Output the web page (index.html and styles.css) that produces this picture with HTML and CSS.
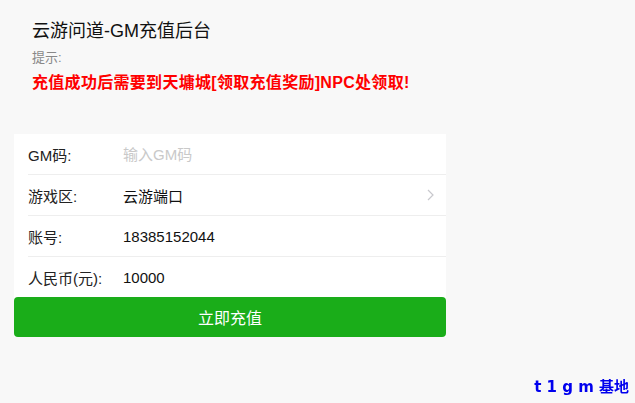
FILE: index.html
```html
<!DOCTYPE html>
<html lang="zh-CN">
<head>
    <meta charset="utf-8">
    <meta name="viewport" content="width=device-width, initial-scale=1.0">
    <title>云游问道-GM充值后台</title>
    <link rel="stylesheet" href="styles.css">
</head>
<body>

    <div class="page">

        <div class="header">
            <h1 class="title">云游问道-GM充值后台</h1>
            <p class="tip-label">提示:</p>
            <p class="tip-text">充值成功后需要到天墉城[领取充值奖励]NPC处领取!</p>
        </div>

        <form class="cells">
            <div class="cell">
                <label class="cell-label">GM码:</label>
                <input class="cell-input" type="text" placeholder="输入GM码">
            </div>
            <div class="cell cell-select">
                <label class="cell-label">游戏区:</label>
                <div class="cell-value">云游端口</div>
                <svg class="arrow" width="7" height="12" viewBox="0 0 7 12">
                    <path d="M1 1l5 5-5 5" fill="none" stroke="#c8c8cd" stroke-width="1.2"/>
                </svg>
            </div>
            <div class="cell">
                <label class="cell-label">账号:</label>
                <div class="cell-value">18385152044</div>
            </div>
            <div class="cell">
                <label class="cell-label">人民币(元):</label>
                <div class="cell-value">10000</div>
            </div>
            <button type="button" class="btn-primary">立即充值</button>
        </form>

    </div>

    <div class="watermark">t 1 g m 基地</div>

</body>
</html>
```

FILE: styles.css
```css
html {
    height: 100%;
}

body {
    margin: 0;
    height: 100%;
    background-color: #f8f8f8;
    font-family: "Liberation Sans", "Noto Sans CJK SC", sans-serif;
    color: #000;
}

.page {
    padding: 19px 0 0;
}

.header {
    padding: 0 32px;
}

.title {
    margin: 0;
    font-size: 18px;
    font-weight: normal;
    line-height: 24px;
    color: #111;
}

.tip-label {
    margin: 5px 0 0;
    font-size: 13px;
    line-height: 20px;
    color: #888;
}

.tip-text {
    margin: 3px 0 0;
    font-size: 16px;
    font-weight: bold;
    line-height: 24px;
    letter-spacing: 0.3px;
    color: #ff0000;
}

.cells {
    width: 432px;
    margin: 39px 0 0 14px;
    background-color: #fff;
}

.cell {
    display: flex;
    align-items: center;
    height: 41px;
    margin-left: 14px;
    box-sizing: border-box;
    font-size: 15px;
}
.cell:first-child {
    height: 40px;
}
.cell + .cell {
    border-top: solid 1px #eeeeee;
}

.cell-label {
    width: 95px;
    color: #222;
}

.cell-value,
.cell-input {
    flex: 1;
    font-size: 15px;
    font-family: inherit;
    color: #111;
}

.cell-input {
    border: 0;
    outline: 0;
    padding: 0;
    background: transparent;
}
.cell-input::placeholder {
    color: #c9c9c9;
}

.cell-select .arrow {
    margin-right: 12px;
}

.btn-primary {
    display: block;
    width: 100%;
    height: 40px;
    border: 0;
    border-radius: 4px;
    background-color: #1aad19;
    color: #fff;
    font-family: inherit;
    font-size: 16px;
}

.watermark {
    position: fixed;
    right: 6px;
    bottom: 6px;
    font-family: "DejaVu Sans", "Noto Sans CJK SC", sans-serif;
    font-size: 15px;
    font-weight: bold;
    line-height: 20px;
    color: #0000ee;
}
```
